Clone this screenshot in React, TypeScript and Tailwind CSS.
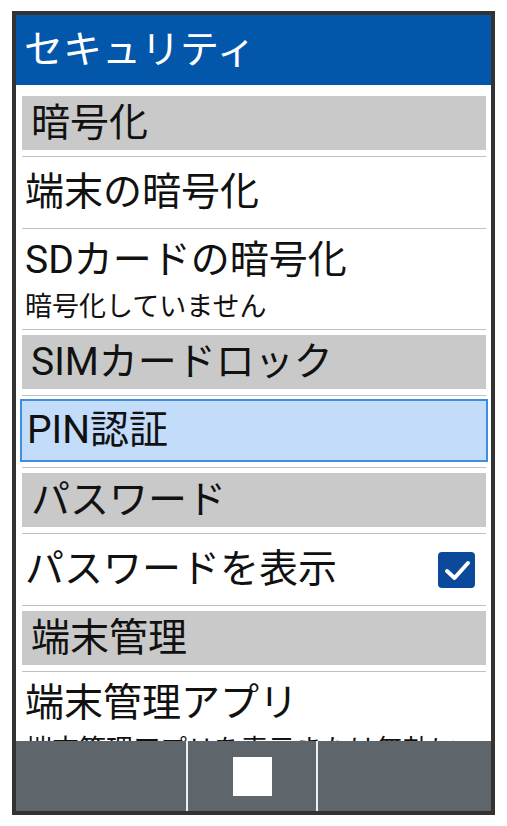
import { Fragment } from 'react';

type Row =
  | { kind: 'section'; label: string }
  | { kind: 'item'; label: string; sub?: string; check?: boolean; focused?: boolean; h: string };

const rows: Row[] = [
  { kind: 'section', label: '暗号化' },
  { kind: 'item', label: '端末の暗号化', h: 'h-[72px]' },
  { kind: 'item', label: 'SDカードの暗号化', sub: '暗号化していません', h: 'h-[101px]' },
  { kind: 'section', label: 'SIMカードロック' },
  { kind: 'item', label: 'PIN認証', focused: true, h: 'h-[72px]' },
  { kind: 'section', label: 'パスワード' },
  { kind: 'item', label: 'パスワードを表示', check: true, h: 'h-[72px]' },
  { kind: 'section', label: '端末管理' },
  { kind: 'item', label: '端末管理アプリ', sub: '端末管理アプリを表示または無効に\nします', h: 'h-[130px]' },
];

const font = "font-['Roboto','Noto_Sans_CJK_JP',sans-serif]";

function Section({ label }: { label: string }) {
  return (
    <div className="border-b border-[#bcc2c2] pb-[6px] pt-[5px]">
      <div className="flex h-[54px] items-center bg-[#c9c9c9] pl-[9px] text-[39px] leading-none text-[#111]">
        {label}
      </div>
    </div>
  );
}

function Item({ row }: { row: Extract<Row, { kind: 'item' }> }) {
  if (row.focused) {
    return (
      <div className={`border-b border-[#bcc2c2] pb-[5px] pt-[3px] ${row.h}`}>
        <div className="-mx-[2px] flex h-full items-center border-2 border-[#3f8de0] bg-[#c2dcfa] pl-[5px] text-[39px] leading-none text-[#111]">
          {row.label}
        </div>
      </div>
    );
  }
  if (row.sub) {
    return (
      <div className={`shrink-0 border-b border-[#bcc2c2] pl-[3px] pt-[8px] ${row.h}`}>
        <div className="text-[39px] leading-[46px] text-[#111]">{row.label}</div>
        <div className="mt-[8px] whitespace-pre-line text-[27px] leading-[32px] text-[#111]">{row.sub}</div>
      </div>
    );
  }
  return (
    <div className={`flex items-center justify-between border-b border-[#bcc2c2] pl-[3px] pr-[11px] ${row.h}`}>
      <span className="text-[39px] leading-none text-[#111]">{row.label}</span>
      {row.check && (
        <span className="flex h-[36px] w-[37px] items-center justify-center rounded-[4px] bg-[#0b4a9b]">
          <svg viewBox="0 0 36 36" className="h-[36px] w-[36px]" fill="none" stroke="white" strokeWidth="4" strokeLinecap="round" strokeLinejoin="round">
            <path d="M8 19l7.5 7L29 11" />
          </svg>
        </span>
      )}
    </div>
  );
}

export default function App() {
  return (
    <div className={`h-[826px] w-[507px] bg-white pl-[12px] pt-[11px] ${font}`}>
      <div className="flex h-[804px] w-[483px] flex-col border-4 border-[#333] bg-white">
        <div className="flex h-[70px] shrink-0 items-center bg-[#0257aa] pl-[8px] text-[39px] leading-none text-white">
          セキュリティ
        </div>
        <div className="flex-1 overflow-hidden pl-[6px] pr-[5px] pt-[6px]">
          {rows.map((row, i) => (
            <Fragment key={i}>
              {row.kind === 'section' ? <Section label={row.label} /> : <Item row={row} />}
            </Fragment>
          ))}
        </div>
        <div className="flex h-[70px] shrink-0 bg-[#5f666b]">
          <div className="w-[172px] border-r-2 border-[#eee]" />
          <div className="flex w-[130px] items-center justify-center border-r-2 border-[#eee]">
            <div className="h-[39px] w-[39px] bg-white" />
          </div>
          <div className="flex-1" />
        </div>
      </div>
    </div>
  );
}
